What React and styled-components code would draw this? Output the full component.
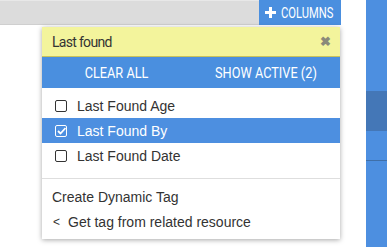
import styled, { createGlobalStyle } from "styled-components"

const GlobalStyle = createGlobalStyle`
  html, body { margin: 0; padding: 0; background: #fff; }
  body { font-family: "Liberation Sans", Arial, sans-serif; }
`

const Page = styled.div`
  display: flex;
  width: 387px;
  height: 247px;
  overflow: hidden;
`

const Main = styled.div`
  position: relative;
  flex: 1;
  padding-right: 25px;
`

const Toolbar = styled.div`
  display: flex;
  height: 25px;
`

const GreyBar = styled.div`
  flex: 1;
  background: #dcdcdc;
  border-top: 1px solid #e8e8e8;
  border-bottom: 1px solid #cfcfcf;
`

const ColumnsButton = styled.button`
  display: flex;
  align-items: center;
  gap: 5px;
  width: 82px;
  padding: 0 0 0 6px;
  border: 0;
  background: #4a8fdf;
  color: #fff;
  font-family: Roboto, sans-serif;
  font-size: 14px;
  white-space: nowrap;
  overflow: hidden;
`

const PlusIcon = styled.svg`
  flex-shrink: 0;
`

// Roboto squeezed to stand in for the condensed face of the original
const Condensed = styled.span`
  display: inline-block;
  transform: scaleX(${p => p.scale || 0.85});
  transform-origin: ${p => p.origin || "center"};
`

const Sidebar = styled.div`
  width: 21px;
  background: #4d8fe0;
  display: flex;
  flex-direction: column;
`

const SideBand = styled.div`
  height: ${p => p.h}px;
  background: ${p => p.dark ? "#4477b7" : "#4d8fe0"};
  border-bottom: ${p => p.line ? "1px solid #3f6fa8" : "0"};
`

const Dropdown = styled.div`
  position: absolute;
  top: 27px;
  left: 42px;
  width: 298px;
  background: #fff;
  box-shadow: 0 1px 5px rgba(0, 0, 0, 0.35);
`

const Header = styled.div`
  display: flex;
  align-items: center;
  justify-content: space-between;
  height: 29px;
  padding: 0 10px;
  background: #f3f49c;
  border-bottom: 1px solid #c9c25a;
  font-family: Roboto, sans-serif;
  font-size: 14px;
  letter-spacing: -0.7px;
  color: #333;
`

const Close = styled.span`
  color: #8a8a7a;
  font-size: 13px;
  font-weight: bold;
`

const ActionBar = styled.div`
  display: grid;
  grid-template-columns: 1fr 1fr;
  height: 31px;
  background: #4a8fdf;
`

const Action = styled.button`
  border: 0;
  background: transparent;
  color: #fff;
  font-family: Roboto, sans-serif;
  font-size: 15px;
  white-space: nowrap;
`

const List = styled.div`
  padding: 5px 0 10px;
  border-bottom: 1px solid #dedede;
`

const Item = styled.div`
  display: flex;
  align-items: center;
  gap: 10px;
  height: 25px;
  padding-left: 13px;
  font-size: 14px;
  background: ${p => p.active ? "#4d8fe0" : "transparent"};
  color: ${p => p.active ? "#fff" : "#333"};
`

const Box = styled.span`
  display: flex;
  align-items: center;
  justify-content: center;
  box-sizing: border-box;
  width: 12px;
  height: 12px;
  border: 1.5px solid ${p => p.checked ? "#fff" : "#333"};
  border-radius: 2px;
`

const Footer = styled.div`
  padding: 5px 0 5px;
`

const Link = styled.div`
  display: flex;
  align-items: center;
  gap: 8px;
  height: 25px;
  padding-left: 10px;
  font-size: 14px;
  color: #333;
`

const Chevron = styled.span`
  font-size: 12px;
  padding-left: 1px;
`

const fields = [
  { name: "Last Found Age", checked: false },
  { name: "Last Found By", checked: true },
  { name: "Last Found Date", checked: false },
]

const App = () => {
  return (
    <Page>
      <GlobalStyle />
      <Main>
        <Toolbar>
          <GreyBar />
          <ColumnsButton>
            <PlusIcon width="11" height="11" viewBox="0 0 11 11">
              <path d="M4 0h3v4h4v3H7v4H4V7H0V4h4z" fill="#fff" />
            </PlusIcon>
            <Condensed scale={0.8} origin="left">COLUMNS</Condensed>
          </ColumnsButton>
        </Toolbar>
        <Dropdown>
          <Header>
            Last found
            <Close>✖</Close>
          </Header>
          <ActionBar>
            <Action><Condensed>CLEAR ALL</Condensed></Action>
            <Action><Condensed>SHOW ACTIVE (2)</Condensed></Action>
          </ActionBar>
          <List>
            {fields.map(f => (
              <Item key={f.name} active={f.checked}>
                <Box checked={f.checked}>
                  {f.checked && (
                    <svg width="9" height="8" viewBox="0 0 9 8">
                      <path d="M1 4l2.5 2.5L8.5 1" stroke="#fff" strokeWidth="1.8" fill="none" />
                    </svg>
                  )}
                </Box>
                {f.name}
              </Item>
            ))}
          </List>
          <Footer>
            <Link>Create Dynamic Tag</Link>
            <Link><Chevron>&lt;</Chevron>Get tag from related resource</Link>
          </Footer>
        </Dropdown>
      </Main>
      <Sidebar>
        <SideBand h={91} />
        <SideBand h={40} dark />
        <SideBand h={29} line />
        <SideBand h={86} />
      </Sidebar>
    </Page>
  )
}

export default App
